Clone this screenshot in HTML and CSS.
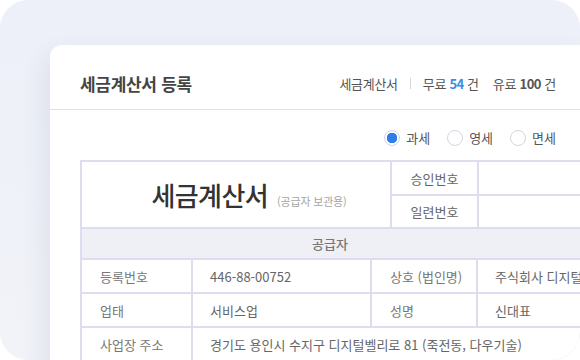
FILE: index.html
```html
<!DOCTYPE html>
<html lang="ko">
<head>
  <meta charset="UTF-8">
  <title>세금계산서 등록</title>
  <link rel="stylesheet" href="styles.css">
</head>
<body>

  <div class="scene">
    <div class="card">
      <header class="card-head">
        <h1 class="card-title">세금계산서 등록</h1>
        <div class="usage">
          <span>세금계산서</span>
          <span class="usage-sep"></span>
          <span>무료 <strong class="num-free">54</strong> 건</span>
          <span class="usage-paid">유료 <strong class="num-paid">100</strong> 건</span>
        </div>
      </header>

      <div class="card-body">
        <div class="tax-type">
          <label class="radio"><span class="radio-mark checked"></span>과세</label>
          <label class="radio"><span class="radio-mark"></span>영세</label>
          <label class="radio"><span class="radio-mark"></span>면세</label>
        </div>

        <div class="doc">
          <div class="doc-top">
            <div class="cell doc-title">세금계산서 <small>(공급자 보관용)</small></div>
            <div class="cell center">승인번호</div>
            <div class="cell"></div>
            <div class="cell center">일련번호</div>
            <div class="cell"></div>
          </div>

          <div class="doc-caption">공급자</div>

          <div class="doc-main">
            <div class="cell label">등록번호</div>
            <div class="cell value">446-88-00752</div>
            <div class="cell label">상호 (법인명)</div>
            <div class="cell value">주식회사 디지털</div>

            <div class="cell label">업태</div>
            <div class="cell value">서비스업</div>
            <div class="cell label">성명</div>
            <div class="cell value">신대표</div>

            <div class="cell label">사업장 주소</div>
            <div class="cell value wide">경기도 용인시 수지구 디지털벨리로 81 (죽전동, 다우기술)</div>
          </div>
        </div>
      </div>
    </div>
  </div>

</body>
</html>
```

FILE: styles.css
```css
body {
  margin: 0;
  background: #fff;
  font-family: "Noto Sans CJK KR", "Noto Sans", sans-serif;
}
.scene {
  width: 580px;
  height: 360px;
  border-radius: 28px;
  overflow: hidden;
  background: linear-gradient(180deg, #edf0f8 0%, #f1f3f8 100%);
}
.card {
  width: 536px;
  height: 340px;
  margin: 45px 0 0 50px;
  background: #fff;
  border-radius: 12px 0 0 0;
  box-shadow: -6px 10px 26px rgba(60, 70, 110, 0.09);
}
.card-head {
  display: flex;
  justify-content: space-between;
  align-items: center;
  height: 65px;
  box-sizing: border-box;
  padding: 12px 30px 0;
  border-bottom: 1px solid #dfe0e6;
}
.card-title {
  margin: 0;
  font-size: 17px;
  font-weight: 700;
  color: #444;
  letter-spacing: -0.3px;
}
.usage {
  display: flex;
  align-items: center;
  font-size: 13px;
  color: #555;
  letter-spacing: -0.3px;
}
.usage strong {
  font-weight: 700;
  letter-spacing: -0.5px;
}
.usage-sep {
  width: 1px;
  height: 11px;
  background: #d8d8dc;
  margin: 0 12px;
}
.num-free {
  color: #3a8ee6;
}
.num-paid {
  color: #555;
}
.usage-paid {
  margin-left: 14px;
}
.card-body {
  padding: 0 0 0 30px;
}
.tax-type {
  display: flex;
  justify-content: flex-end;
  gap: 17px;
  padding: 20px 30px 14px 0;
  font-size: 13px;
  line-height: 16px;
  color: #555;
}
.radio {
  display: flex;
  align-items: center;
  gap: 6px;
}
.radio-mark {
  width: 16px;
  height: 16px;
  box-sizing: border-box;
  border: 1px solid #d3d6de;
  border-radius: 50%;
  background: #fff;
}
.radio-mark.checked {
  border-color: #c9d6ee;
  background: radial-gradient(circle, #2f7fe8 0 5px, #fff 5.5px);
}
.doc {
  display: flex;
  flex-direction: column;
  gap: 2px;
  padding: 2px;
  background: #dedcef;
  font-size: 13px;
}
.doc-top {
  display: grid;
  grid-template-columns: 308px 85px 1fr;
  grid-template-rows: 32px 31px;
  gap: 2px;
}
.doc-main {
  display: grid;
  grid-template-columns: 109px 177px 104px 1fr;
  grid-template-rows: 32px 32px 32px;
  gap: 2px;
}
.cell {
  display: flex;
  align-items: center;
  background: #fff;
  color: #666;
  white-space: nowrap;
  overflow: hidden;
}
.cell.center {
  justify-content: center;
}
.doc-title {
  grid-row: span 2;
  justify-content: center;
  align-items: baseline;
  padding: 14px 0 0 26px;
  gap: 9px;
  font-size: 26px;
  font-weight: 500;
  color: #333;
  letter-spacing: -0.6px;
}
.doc-title small {
  font-size: 11px;
  font-weight: 400;
  color: #a5a5a5;
  letter-spacing: -0.2px;
}
.doc-caption {
  height: 29px;
  display: flex;
  align-items: center;
  justify-content: center;
  padding-right: 6px;
  background: #eef0f6;
  color: #777;
  font-weight: 500;
}
.label {
  padding-left: 18px;
  color: #777;
}
.value {
  padding-left: 17px;
  color: #666;
}
.wide {
  grid-column: span 3;
}
```
